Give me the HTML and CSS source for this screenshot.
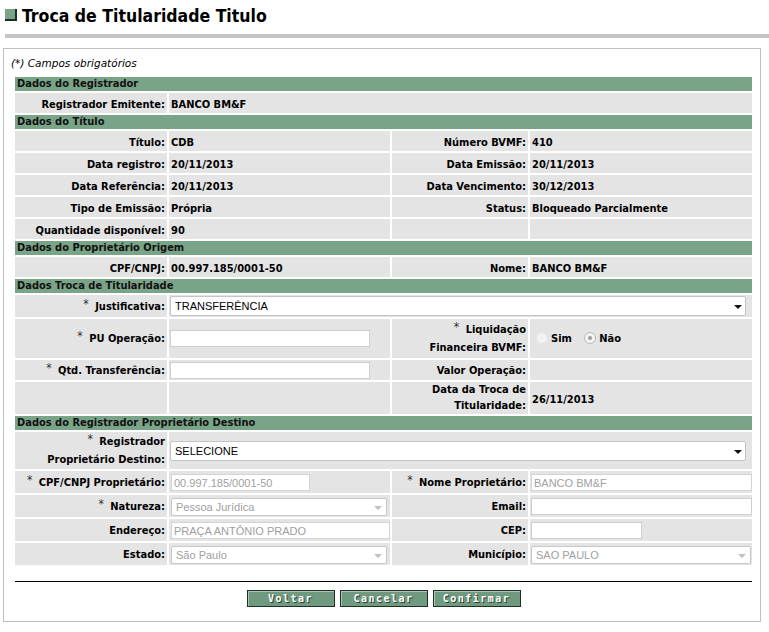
FILE: index.html
```html
<!DOCTYPE html>
<html lang="pt-BR">
<head>
<meta charset="utf-8">
<title>Troca de Titularidade Titulo</title>
<link rel="stylesheet" href="styles.css">
</head>
<body>
<h1 class="page-title"><span class="title-icon"></span>Troca de Titularidade Titulo</h1>
<div class="title-rule"></div>

<div class="panel">
  <p class="note">(*) Campos obrigatórios</p>
  <table class="form">
    <colgroup>
      <col class="c1"><col class="c2"><col class="c3"><col class="c4">
    </colgroup>
    <tr class="sec"><th colspan="4">Dados do Registrador</th></tr>
    <tr>
      <td class="lbl">Registrador Emitente:</td>
      <td class="val" colspan="3">BANCO BM&amp;F</td>
    </tr>
    <tr class="sec"><th colspan="4">Dados do Título</th></tr>
    <tr>
      <td class="lbl">Título:</td><td class="val">CDB</td>
      <td class="lbl">Número BVMF:</td><td class="val">410</td>
    </tr>
    <tr>
      <td class="lbl">Data registro:</td><td class="val">20/11/2013</td>
      <td class="lbl">Data Emissão:</td><td class="val">20/11/2013</td>
    </tr>
    <tr>
      <td class="lbl">Data Referência:</td><td class="val">20/11/2013</td>
      <td class="lbl">Data Vencimento:</td><td class="val">30/12/2013</td>
    </tr>
    <tr>
      <td class="lbl">Tipo de Emissão:</td><td class="val">Própria</td>
      <td class="lbl">Status:</td><td class="val">Bloqueado Parcialmente</td>
    </tr>
    <tr>
      <td class="lbl">Quantidade disponível:</td><td class="val">90</td>
      <td class="lbl"></td><td class="val"></td>
    </tr>
    <tr class="sec"><th colspan="4">Dados do Proprietário Origem</th></tr>
    <tr>
      <td class="lbl">CPF/CNPJ:</td><td class="val">00.997.185/0001-50</td>
      <td class="lbl">Nome:</td><td class="val">BANCO BM&amp;F</td>
    </tr>
    <tr class="sec"><th colspan="4">Dados Troca de Titularidade</th></tr>
    <tr class="r-just">
      <td class="lbl"><span class="req">*</span> Justificativa:</td>
      <td class="val" colspan="3"><div class="sel sel-wide">TRANSFERÊNCIA</div></td>
    </tr>
    <tr class="r-pu">
      <td class="lbl"><span class="req">*</span> PU Operação:</td>
      <td class="val"><input class="inp inp-pu" type="text"></td>
      <td class="lbl lbl-2"><span class="req">*</span> Liquidação<br>Financeira BVMF:</td>
      <td class="val">
        <span class="radio radio-off"></span><span class="rlabel">Sim</span>
        <span class="radio radio-on"></span><span class="rlabel">Não</span>
      </td>
    </tr>
    <tr class="r-qtd">
      <td class="lbl"><span class="req">*</span> Qtd. Transferência:</td>
      <td class="val"><input class="inp inp-pu" type="text"></td>
      <td class="lbl">Valor Operação:</td>
      <td class="val"></td>
    </tr>
    <tr class="r-data">
      <td class="lbl"></td><td class="val"></td>
      <td class="lbl">Data da Troca de<br>Titularidade:</td>
      <td class="val val-low">26/11/2013</td>
    </tr>
    <tr class="sec"><th colspan="4">Dados do Registrador Proprietário Destino</th></tr>
    <tr class="r-dest">
      <td class="lbl lbl-2"><span class="req">*</span> Registrador<br>Proprietário Destino:</td>
      <td class="val" colspan="3"><div class="sel sel-wide">SELECIONE</div></td>
    </tr>
    <tr class="r-in">
      <td class="lbl"><span class="req">*</span> CPF/CNPJ Proprietário:</td>
      <td class="val"><input class="inp inp-dis inp-cpf" type="text" value="00.997.185/0001-50" disabled></td>
      <td class="lbl"><span class="req">*</span> Nome Proprietário:</td>
      <td class="val"><input class="inp inp-dis inp-full" type="text" value="BANCO BM&amp;F" disabled></td>
    </tr>
    <tr class="r-in">
      <td class="lbl"><span class="req">*</span> Natureza:</td>
      <td class="val"><div class="sel sel-dis sel-mid">Pessoa Jurídica</div></td>
      <td class="lbl">Email:</td>
      <td class="val"><input class="inp inp-full" type="text"></td>
    </tr>
    <tr class="r-in">
      <td class="lbl">Endereço:</td>
      <td class="val"><input class="inp inp-dis inp-end" type="text" value="PRAÇA ANTÔNIO PRADO" disabled></td>
      <td class="lbl">CEP:</td>
      <td class="val"><input class="inp inp-cep" type="text"></td>
    </tr>
    <tr class="r-in">
      <td class="lbl">Estado:</td>
      <td class="val"><div class="sel sel-dis sel-mid">São Paulo</div></td>
      <td class="lbl">Município:</td>
      <td class="val"><div class="sel sel-dis sel-mun">SAO PAULO</div></td>
    </tr>
  </table>
  <div class="actions">
    <button class="btn" type="button">Voltar</button>
    <button class="btn" type="button">Cancelar</button>
    <button class="btn" type="button">Confirmar</button>
  </div>
</div>
</body>
</html>
```

FILE: styles.css
```css
* { box-sizing: border-box; }

body {
  margin: 0;
  background: #ffffff;
  font-family: "DejaVu Sans Condensed", "DejaVu Sans", sans-serif;
  font-size: 11px;
  color: #000;
}

.page-title {
  margin: 0;
  padding: 5px 0 0 5px;
  height: 34px;
  display: flex;
  align-items: flex-start;
  font-size: 17.5px;
  font-weight: bold;
  line-height: 22px;
  color: #000;
}

.title-icon {
  width: 12px;
  height: 12px;
  margin: 4px 5px 0 0;
  background: #7aa488;
  border-right: 2px solid #1e2e24;
  border-bottom: 2px solid #1e2e24;
}

.title-rule {
  margin-left: 5px;
  height: 4px;
  background: #c4c4c4;
}

.panel {
  margin: 10px 0 0 3px;
  width: 758px;
  height: 574px;
  border: 1px solid #c0c0c0;
}

.note {
  margin: 0;
  padding: 7px 0 0 7px;
  height: 26px;
  font-family: "DejaVu Sans", sans-serif;
  font-size: 10.5px;
  font-style: italic;
  line-height: 14px;
}

.form {
  margin-left: 9px;
  width: 741px;
  table-layout: fixed;
  border-collapse: separate;
  border-spacing: 2px;
}

.c1 { width: 152px; }
.c2 { width: 221px; }
.c3 { width: 136px; }
.c4 { width: 222px; }

.form th,
.form td {
  padding: 0;
}

.sec th {
  height: 14px;
  background: #7aa488;
  text-align: left;
  padding: 0 2px;
  font-weight: bold;
  line-height: 14px;
  color: #111;
}

.form td {
  height: 20px;
  background: #e4e4e4;
  font-weight: bold;
  line-height: 16px;
  padding-top: 3px;
  vertical-align: middle;
}

.lbl {
  text-align: right;
  padding-right: 2px !important;
}

.val {
  padding-left: 2px !important;
}

.lbl-2 { line-height: 18px !important; }

.req {
  font-weight: normal;
  font-size: 12px;
  line-height: 12px;
  vertical-align: 2px;
  margin-right: 3px;
  color: #333;
}

.r-just td { height: 22px; padding-top: 0; }
.r-pu td { height: 39px; padding-top: 0; }
.r-qtd td { height: 20px; padding-top: 1px; }
.r-data td { height: 30px; padding-top: 0; }
.r-dest td { height: 37px; padding-top: 0; }
.r-in td { height: 22px; padding-top: 1px; }

.r-data .val-low { padding-top: 3px; }

.inp {
  display: block;
  height: 17px;
  margin: 0;
  border: 1px solid #cfcfcf;
  background: #fff;
  font-family: "Liberation Sans", Arial, sans-serif;
  font-size: 11px;
  padding: 0 2px;
  color: #000;
}

.inp-dis {
  color: #a0a0a0;
  background: #fff;
  border-color: #d4d4d4;
}

.inp-pu { width: 200px; margin-left: -1px; }
.inp-cpf { width: 139px; }
.inp-end { width: 219px; }
.inp-full { width: 221px; margin-left: -1px; }
.inp-cep { width: 111px; margin-left: -1px; }

.sel {
  position: relative;
  display: block;
  height: 20px;
  border: 1px solid #b0b0b0;
  border-radius: 2px;
  background: #fff;
  font-family: "Liberation Sans", Arial, sans-serif;
  font-weight: normal;
  font-size: 11px;
  line-height: 18px;
  padding-left: 4px;
  color: #000;
}

.sel::after {
  content: "";
  position: absolute;
  right: 3px;
  top: 8px;
  border-left: 4px solid transparent;
  border-right: 4px solid transparent;
  border-top: 4px solid #111;
}

.sel-wide { width: 576px; margin-left: -1px; border-color: #c4c4c4; }
.sel-mid { width: 216px; height: 18px; line-height: 16px; border-color: #c8c8c8; }
.sel-mun { width: 220px; height: 18px; line-height: 16px; margin-left: -1px; border-color: #c8c8c8; }

.sel-dis { color: #a0a0a0; }
.sel-dis::after { border-top-color: #c0c0c0; top: 7px; right: 4px; }

.radio {
  display: inline-block;
  width: 12px;
  height: 12px;
  border-radius: 50%;
  vertical-align: -2px;
  margin: 0 3px 0 4px;
  position: relative;
}

.radio-off {
  background: #f2f2f2;
  border: 1px solid #e6e6e6;
}

.radio-on {
  background: #f4f4f4;
  border: 1px solid #b8b8b8;
  margin-left: 9px;
}

.radio-on::after {
  content: "";
  position: absolute;
  left: 3px;
  top: 3px;
  width: 4px;
  height: 4px;
  border-radius: 50%;
  background: #9a9a9a;
}

.rlabel { font-weight: bold; }

.actions {
  margin: 14px 0 0 11px;
  width: 737px;
  border-top: 1px solid #000;
  padding-top: 8px;
  display: flex;
  justify-content: center;
  gap: 5px;
}

.btn {
  width: 88px;
  height: 17px;
  padding: 0;
  background: #6f9a7f;
  border: 1px solid #1f2f25;
  box-shadow: inset 1px 1px 0 #a9c7b2;
  color: #fff;
  font-family: "DejaVu Sans Mono", monospace;
  font-weight: bold;
  font-size: 10px;
  letter-spacing: 1.5px;
  line-height: 15px;
  text-shadow: 1px 1px 0 #2c3f33;
}
```
